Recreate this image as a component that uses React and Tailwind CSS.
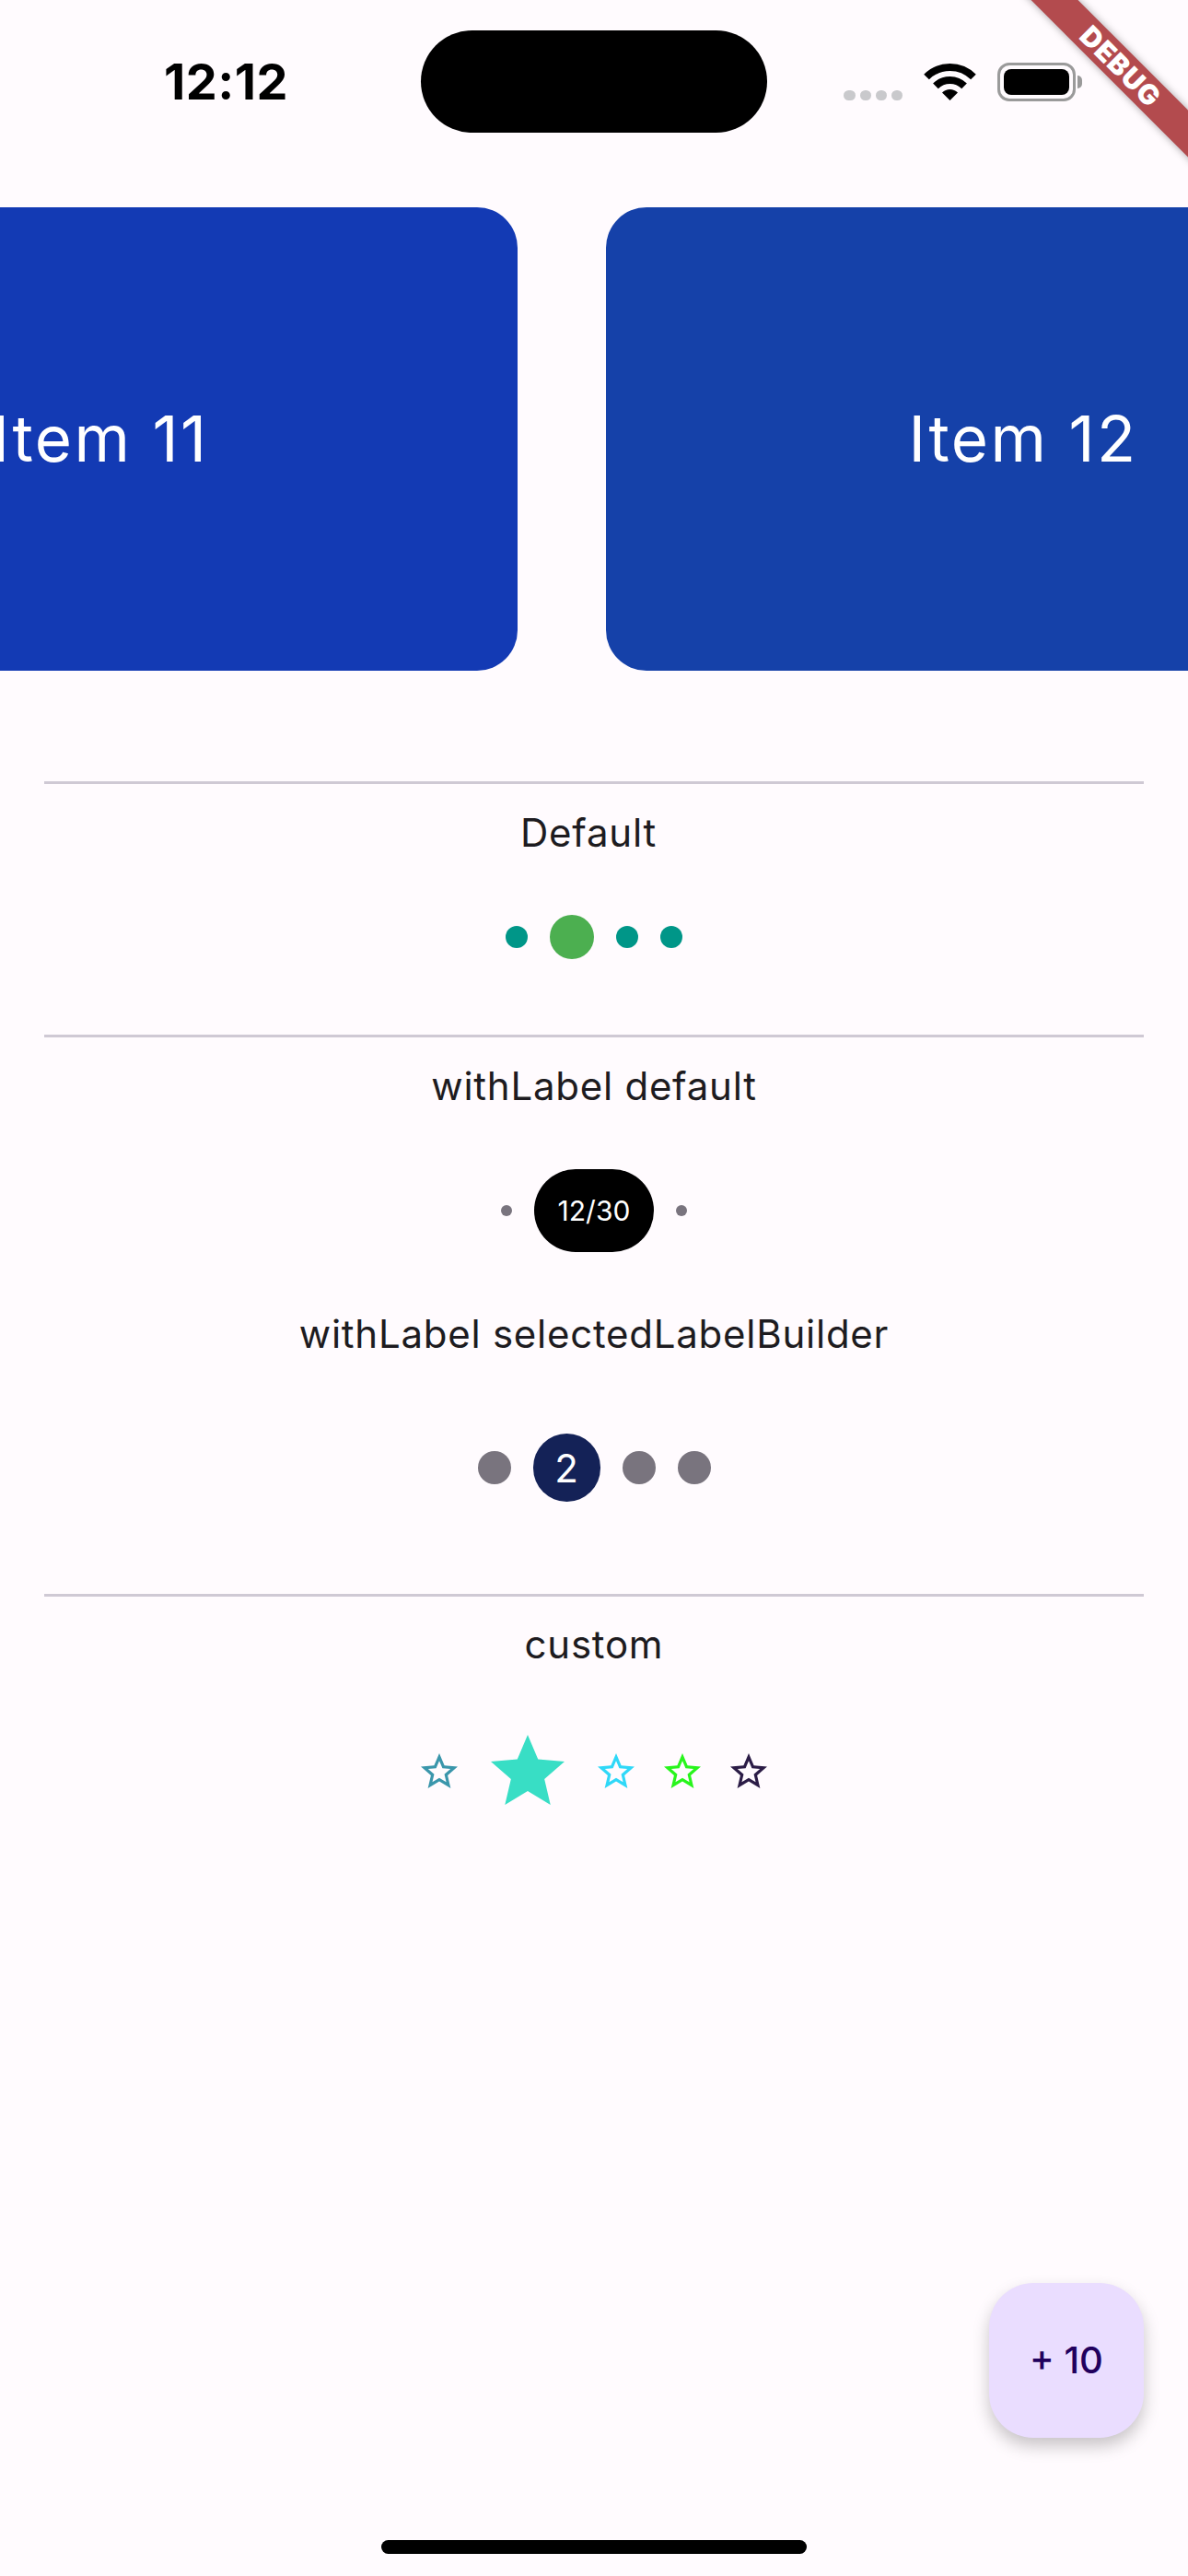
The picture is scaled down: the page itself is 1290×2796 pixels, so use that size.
const STAR_BORDER =
  "M22 9.24l-7.19-.62L12 2 9.19 8.63 2 9.24l5.46 4.73L5.82 21 12 17.27 18.18 21l-1.63-7.03L22 9.24zM12 15.4l-3.76 2.27 1-4.28-3.32-2.88 4.38-.38L12 6.1l1.71 4.04 4.38.38-3.32 2.88 1 4.28L12 15.4z";
const STAR_FULL =
  "M12 17.27L18.18 21l-1.64-7.03L22 9.24l-7.19-.61L12 2 9.19 8.63 2 9.24l5.46 4.73L5.82 21z";

function Star({ size, color, filled }) {
  return (
    <svg width={size} height={size} viewBox="0 0 24 24" className="shrink-0">
      <path d={filled ? STAR_FULL : STAR_BORDER} fill={color} />
    </svg>
  );
}

function StatusBar() {
  return (
    <div className="h-[225px] pt-[33px]">
      <div className="flex h-[111px] items-center">
        <div className="w-[457px] pl-[178px]">
          <span className="text-[54px] font-bold leading-none tracking-[0.5px] text-black">12:12</span>
        </div>
        <div className="h-[111px] w-[376px] rounded-full bg-black" />
        <div className="flex items-center pl-[83px]">
          <div className="flex h-[42px] items-end gap-[5px] pb-[1px]">
            <span className="h-[11px] w-[13px] rounded-full bg-[#c9c9cc]" />
            <span className="h-[11px] w-[12px] rounded-full bg-[#c9c9cc]" />
            <span className="h-[11px] w-[12px] rounded-full bg-[#c9c9cc]" />
            <span className="h-[11px] w-[12px] rounded-full bg-[#c9c9cc]" />
          </div>
          <svg width="57" height="41" viewBox="0 0 57 41" className="ml-[23px]">
            <path d="M3.04 15.54 A36 36 0 0 1 53.96 15.54" fill="none" stroke="#000" strokeWidth="8" />
            <path d="M12.94 25.44 A22 22 0 0 1 44.06 25.44" fill="none" stroke="#000" strokeWidth="8" />
            <path d="M28.5 41 L20.01 32.51 A12 12 0 0 1 36.99 32.51 Z" fill="#000" />
          </svg>
          <div className="ml-[23px] flex items-center">
            <div className="flex h-[42px] w-[85px] items-center justify-center rounded-[13px] border-[3px] border-[#9a9a9a]">
              <div className="h-[28px] w-[71px] rounded-[8px] bg-black" />
            </div>
            <div className="ml-[2px] h-[14px] w-[5px] rounded-r-full bg-[#9a9a9a]" />
          </div>
        </div>
      </div>
    </div>
  );
}

function Label({ children, className = "" }) {
  return (
    <div className={`text-center text-[42px] leading-[51px] tracking-[0.75px] text-[#1d1b20] ${className}`}>
      {children}
    </div>
  );
}

function Divider({ className = "" }) {
  return <div className={`mx-[48px] h-[3px] bg-[#cfc9d4] ${className}`} />;
}

export default function App() {
  return (
    <div
      className="relative h-[2796px] w-[1290px] overflow-hidden bg-[#fffbfe]"
      style={{ fontFamily: "Inter, 'Noto Sans', sans-serif" }}
    >
      <StatusBar />

      <div className="flex h-[503px] gap-[96px] overflow-hidden">
        <div className="ml-[-344px] flex h-full w-[906px] shrink-0 items-center justify-center rounded-[44px] bg-[#133ab4]">
          <span className="text-[69px] font-normal tracking-[2.5px] text-white">Item 11</span>
        </div>
        <div className="flex h-full w-[906px] shrink-0 items-center justify-center rounded-[44px] bg-[#1541a9]">
          <span className="text-[69px] font-normal tracking-[2.5px] text-white">Item 12</span>
        </div>
      </div>

      <Divider className="mt-[120px]" />
      <Label className="mt-[27px] pr-[12px]">Default</Label>
      <div className="mt-[64px] flex h-[48px] items-center justify-center gap-[24px]">
        <span className="h-[24px] w-[24px] rounded-full bg-[#009688]" />
        <span className="h-[48px] w-[48px] rounded-full bg-[#4caf50]" />
        <span className="h-[24px] w-[24px] rounded-full bg-[#009688]" />
        <span className="h-[24px] w-[24px] rounded-full bg-[#009688]" />
      </div>

      <Divider className="mt-[82px]" />
      <Label className="mt-[27px]">withLabel default</Label>
      <div className="mt-[65px] flex h-[90px] items-center justify-center gap-[24px]">
        <span className="h-[12px] w-[12px] rounded-full bg-[#79747e]" />
        <span className="flex h-[90px] w-[130px] items-center justify-center rounded-full bg-black text-[30px] text-white">
          12/30
        </span>
        <span className="h-[12px] w-[12px] rounded-full bg-[#79747e]" />
      </div>
      <Label className="mt-[63px]">withLabel selectedLabelBuilder</Label>
      <div className="mt-[83px] flex h-[74px] items-center justify-center gap-[24px]">
        <span className="h-[36px] w-[36px] rounded-full bg-[#79747e]" />
        <span className="flex h-[74px] w-[73px] items-center justify-center rounded-full bg-[#142257] text-[42px] text-white">
          2
        </span>
        <span className="h-[36px] w-[36px] rounded-full bg-[#79747e]" />
        <span className="h-[36px] w-[36px] rounded-full bg-[#79747e]" />
      </div>

      <Divider className="mt-[100px]" />
      <Label className="mt-[26px]">custom</Label>
      <div className="mt-[65px] flex h-[96px] items-center justify-center gap-[24px]">
        <Star size={48} color="#3a96ab" />
        <Star size={96} color="#38dec5" filled />
        <Star size={48} color="#2fd8f8" />
        <Star size={48} color="#28f51c" />
        <Star size={48} color="#2b1c46" />
      </div>

      {/* floating action button */}
      <div className="absolute left-[1074px] top-[2478px] flex h-[168px] w-[168px] items-center justify-center rounded-[48px] bg-[#eaddff] shadow-[0_9px_18px_rgba(0,0,0,0.22)]">
        <span className="text-[40px] font-medium text-[#21005d]">+ 10</span>
      </div>

      {/* home indicator */}
      <div className="absolute bottom-[24px] left-[414px] h-[15px] w-[462px] rounded-full bg-black" />

      {/* debug banner */}
      <div className="absolute left-[1067px] top-[54px] flex h-[36px] w-[300px] rotate-45 items-center justify-center bg-[#b34b4e] shadow-[0_0_8px_rgba(0,0,0,0.35)]">
        <span className="text-[30px] font-black leading-none tracking-[1px] text-white">DEBUG</span>
      </div>
    </div>
  );
}
